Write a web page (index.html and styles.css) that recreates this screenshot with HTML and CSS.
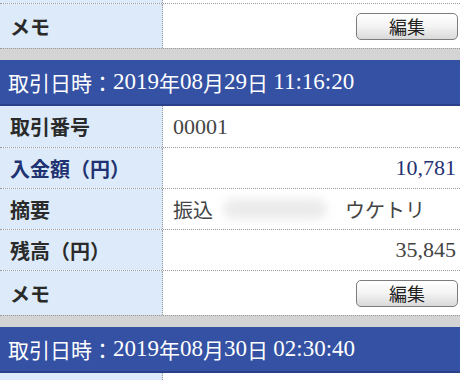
FILE: index.html
```html
<!DOCTYPE html>
<html lang="ja">

<head>
    <meta charset="UTF-8">
    <meta name="viewport" content="width=device-width, initial-scale=1.0">
    <title>入出金明細</title>
    <link rel="stylesheet" href="styles.css">
</head>

<body>
    <div class="list">
        <!-- tail of the previous record -->
        <div class="record">
            <div class="row row-cut">
                <div class="label"></div>
                <div class="value"></div>
            </div>
            <div class="row row-memo">
                <div class="label">メモ</div>
                <div class="value right"><button class="edit-btn">編集</button></div>
            </div>
        </div>

        <div class="gap"></div>

        <div class="record">
            <h2 class="record-head">取引日時：<span class="num">2019</span>年<span class="num">08</span>月<span class="num">29</span>日 <span class="num">11:16:20</span></h2>
            <div class="row">
                <div class="label">取引番号</div>
                <div class="value"><span class="num">00001</span></div>
            </div>
            <div class="row">
                <div class="label label-in">入金額（円）</div>
                <div class="value right amount-in"><span class="num">10,781</span></div>
            </div>
            <div class="row">
                <div class="label">摘要</div>
                <div class="value">振込<span class="masked"></span>ウケトリ</div>
            </div>
            <div class="row">
                <div class="label">残高（円）</div>
                <div class="value right"><span class="num">35,845</span></div>
            </div>
            <div class="row row-memo">
                <div class="label">メモ</div>
                <div class="value right"><button class="edit-btn">編集</button></div>
            </div>
        </div>

        <div class="gap"></div>

        <div class="record">
            <h2 class="record-head">取引日時：<span class="num">2019</span>年<span class="num">08</span>月<span class="num">30</span>日 <span class="num">02:30:40</span></h2>
            <!-- next row is below the fold -->
            <div class="row">
                <div class="label"></div>
                <div class="value"></div>
            </div>
        </div>
    </div>
</body>

</html>
```

FILE: styles.css
```css
* {
    margin: 0;
    padding: 0;
    box-sizing: border-box;
}

body {
    font-family: "Liberation Serif", "Noto Sans CJK JP", serif;
    background-color: #fff;
    color: #333;
    width: 460px;
    height: 380px;
    overflow: hidden;
}

.row {
    display: grid;
    grid-template-columns: 163px 1fr;
    height: 41px;
    border-top: 1px dotted #9a9a9a;
}

.row-cut {
    height: 3px;
    border-top: none;
}

.row-memo {
    height: 45px;
}

.label {
    background-color: #dceaf9;
    border-right: 1px dotted #9a9a9a;
    display: flex;
    align-items: center;
    padding-left: 10px;
    font-size: 20px;
    font-weight: 700;
    color: #2a2a2a;
}

.label-in {
    color: #1f3272;
}

.value {
    display: flex;
    align-items: center;
    padding-left: 10px;
    padding-right: 4px;
    font-size: 20px;
    color: #444;
}

.right {
    justify-content: flex-end;
}

.amount-in {
    color: #1f3272;
}

.num {
    font-size: 22px;
}

.masked {
    display: inline-block;
    width: 104px;
    height: 20px;
    margin: 0 18px 0 10px;
    background-color: #ebebeb;
    border-radius: 10px;
    filter: blur(5px);
}

.edit-btn {
    width: 102px;
    height: 27px;
    border: 1px solid #7c7c7c;
    border-radius: 5px;
    background: linear-gradient(#ffffff, #f3f3f3 50%, #d9d9d9);
    font-family: "Noto Sans CJK JP", sans-serif;
    font-size: 18px;
    color: #222;
    line-height: 1;
    margin-right: -2px;
}

.gap {
    height: 12px;
    background-color: #d4d4d4;
    border-top: 1px dotted #9a9a9a;
}

.record-head {
    height: 46px;
    background-color: #3451a3;
    border-bottom: 2px solid #2a4088;
    color: #fff;
    font-size: 21px;
    font-weight: 400;
    display: flex;
    align-items: center;
    padding-left: 8px;
    white-space: pre;
}

.record-head .num {
    font-size: 23px;
}

.record-head + .row {
    border-top: none;
}
```
